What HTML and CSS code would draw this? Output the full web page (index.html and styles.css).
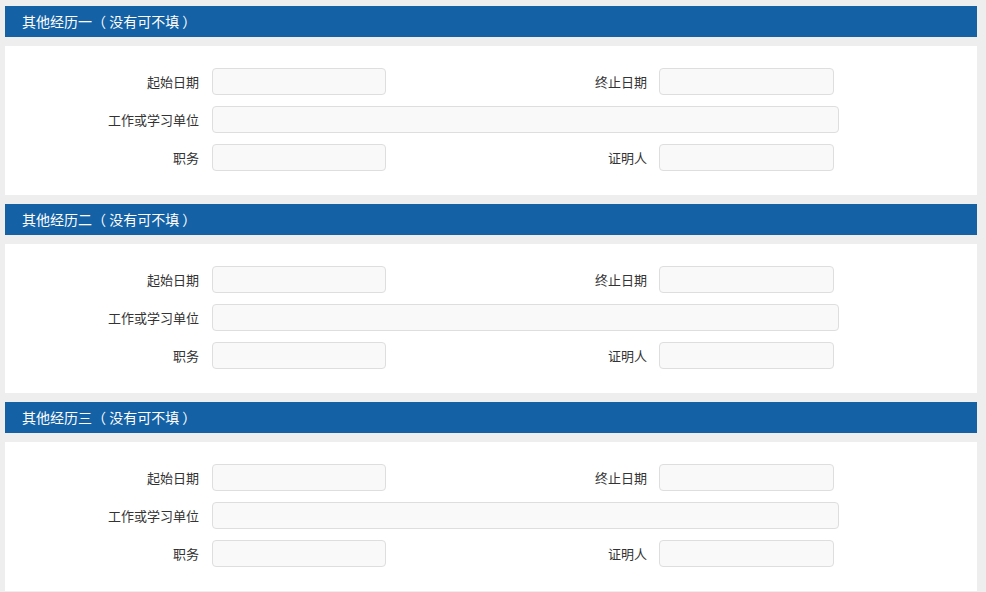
FILE: index.html
```html
<!DOCTYPE html>
<html lang="zh">
<head>
<meta charset="utf-8">
<link rel="stylesheet" href="styles.css">
</head>
<body>
<div class="page">
  <section class="block">
    <div class="bar">其他经历一（ 没有可不填 ）</div>
    <div class="panel">
      <div class="row"><label class="lbl">起始日期</label><input class="inp"><label class="lbl2">终止日期</label><input class="inp inp2"></div>
      <div class="row"><label class="lbl">工作或学习单位</label><input class="inp wide"></div>
      <div class="row"><label class="lbl">职务</label><input class="inp"><label class="lbl2">证明人</label><input class="inp inp2"></div>
    </div>
  </section>
  <section class="block">
    <div class="bar">其他经历二（ 没有可不填 ）</div>
    <div class="panel">
      <div class="row"><label class="lbl">起始日期</label><input class="inp"><label class="lbl2">终止日期</label><input class="inp inp2"></div>
      <div class="row"><label class="lbl">工作或学习单位</label><input class="inp wide"></div>
      <div class="row"><label class="lbl">职务</label><input class="inp"><label class="lbl2">证明人</label><input class="inp inp2"></div>
    </div>
  </section>
  <section class="block">
    <div class="bar">其他经历三（ 没有可不填 ）</div>
    <div class="panel">
      <div class="row"><label class="lbl">起始日期</label><input class="inp"><label class="lbl2">终止日期</label><input class="inp inp2"></div>
      <div class="row"><label class="lbl">工作或学习单位</label><input class="inp wide"></div>
      <div class="row"><label class="lbl">职务</label><input class="inp"><label class="lbl2">证明人</label><input class="inp inp2"></div>
    </div>
  </section>
</div>
</body>
</html>
```
FILE: styles.css
```css
html, body {
  margin: 0;
  padding: 0;
  background: #eeeeee;
}
body {
  font-family: "Noto Sans CJK SC", "Noto Sans", sans-serif;
  font-size: 13px;
  color: #333;
}
.page {
  padding: 6px 9px 0 5px;
  display: flex;
  flex-direction: column;
  gap: 9px;
}
.block {
  display: flex;
  flex-direction: column;
  gap: 9px;
}
.bar {
  height: 31px;
  line-height: 30px;
  background: #1461a5;
  color: #fff;
  padding-left: 17px;
  font-size: 14px;
  white-space: pre;
}
.panel {
  background: #fff;
  height: 149px;
  box-sizing: border-box;
  padding-top: 22px;
  display: flex;
  flex-direction: column;
  gap: 11px;
}
.row {
  display: flex;
  align-items: center;
  height: 27px;
}
.lbl {
  width: 207px;
  padding-right: 13px;
  box-sizing: border-box;
  text-align: right;
  white-space: nowrap;
}
.lbl2 {
  width: 273px;
  padding-right: 12px;
  box-sizing: border-box;
  text-align: right;
}
.inp {
  width: 174px;
  height: 27px;
  box-sizing: border-box;
  border: 1px solid #dedede;
  border-radius: 4px;
  background: #f9f9f9;
  margin: 0;
  padding: 0 6px;
  font: inherit;
}
.inp2 {
  width: 175px;
}
.wide {
  width: 627px;
}
```
